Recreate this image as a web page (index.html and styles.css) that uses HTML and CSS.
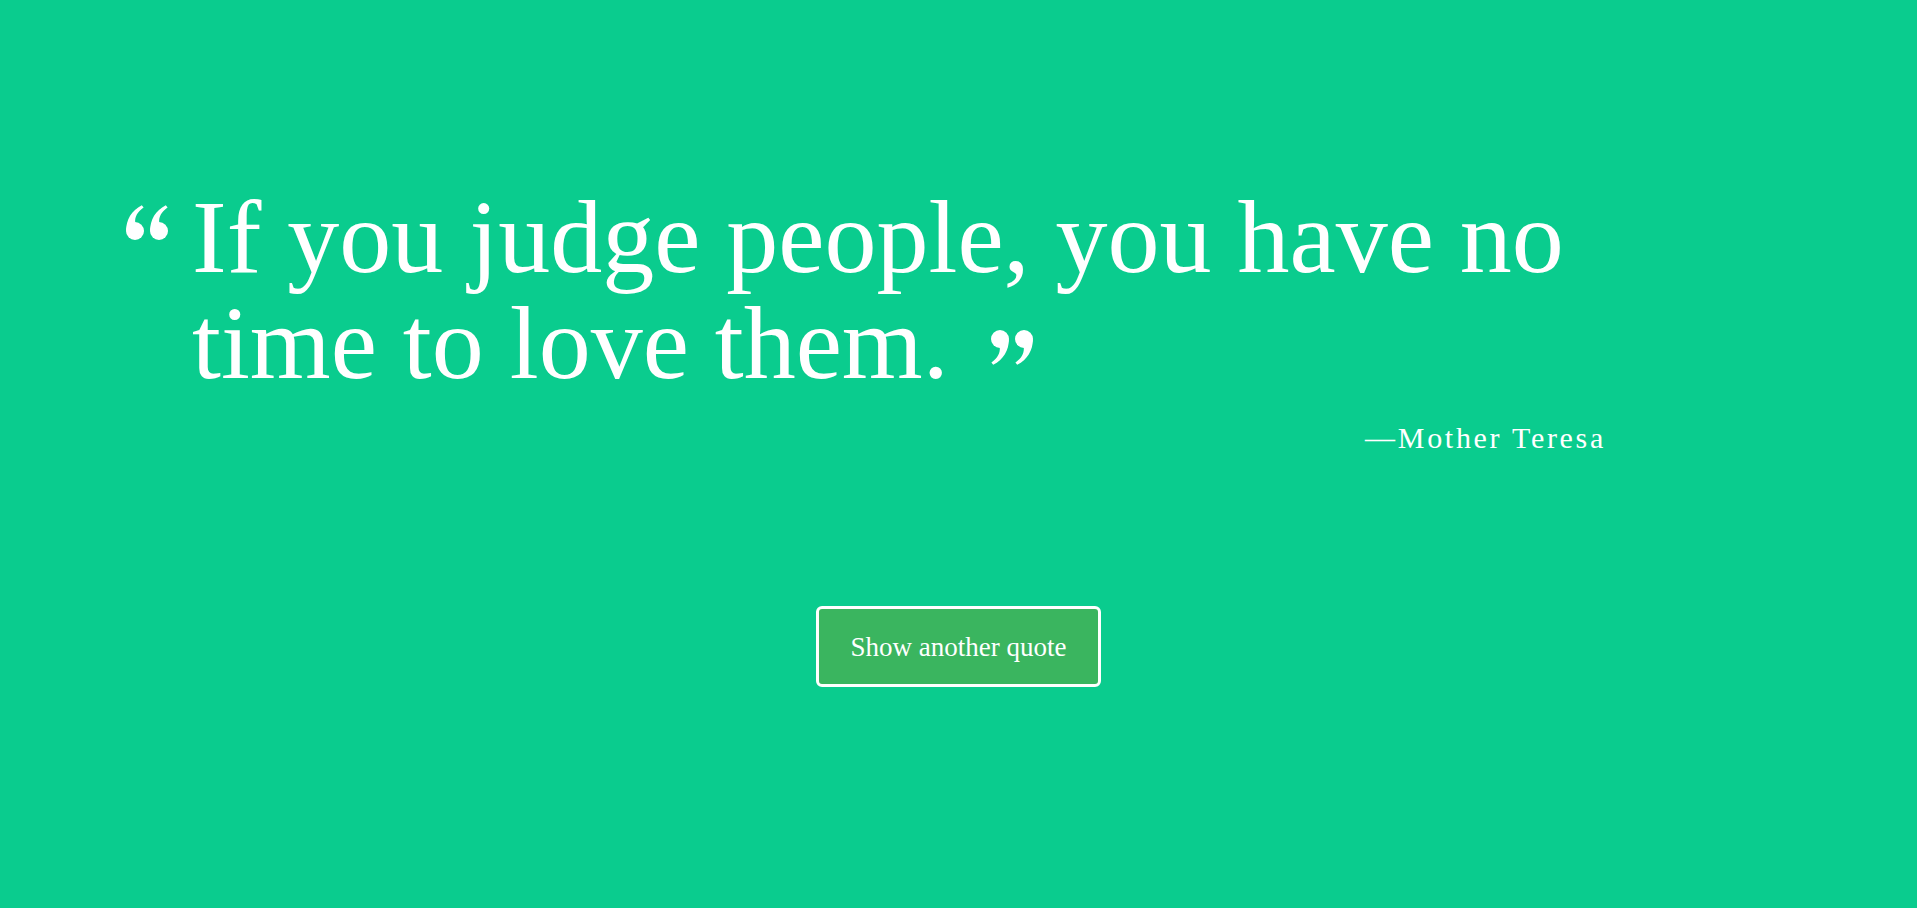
FILE: index.html
```html
<!DOCTYPE html>
<html lang="en">
<head>
<meta charset="utf-8">
<title>Random Quote</title>
<link rel="stylesheet" href="styles.css">
</head>
<body>
<main class="page">
  <section class="quote-box">
    <div class="quote-row">
      <svg class="quote-open" viewBox="0 0 46 35" aria-hidden="true">
        <g fill="#fff">
          <circle cx="9" cy="26" r="9"/>
          <path d="M0.1 26 C0.1 14.5 5.5 5.5 15.8 0.2 L17.6 2.6 C11.2 7 8.8 12 9.2 17.5 Z"/>
          <circle cx="33" cy="26" r="9"/>
          <path d="M24.1 26 C24.1 14.5 29.5 5.5 39.8 0.2 L41.6 2.6 C35.2 7 32.8 12 33.2 17.5 Z"/>
        </g>
      </svg>
      <p class="quote-text">If you judge people, you have no time to love them.<svg class="quote-close" viewBox="0 0 46 35" aria-hidden="true"><g fill="#fff" transform="rotate(180 23 17.5)"><circle cx="9" cy="26" r="9"/><path d="M0.1 26 C0.1 14.5 5.5 5.5 15.8 0.2 L17.6 2.6 C11.2 7 8.8 12 9.2 17.5 Z"/><circle cx="33" cy="26" r="9"/><path d="M24.1 26 C24.1 14.5 29.5 5.5 39.8 0.2 L41.6 2.6 C35.2 7 32.8 12 33.2 17.5 Z"/></g></svg></p>
    </div>
    <p class="author">—Mother Teresa</p>
  </section>
  <div class="actions">
    <button class="new-quote" type="button">Show another quote</button>
  </div>
</main>
</body>
</html>
```

FILE: styles.css
```css
html, body {
  margin: 0;
  height: 100%;
  background: #0acc8e;
}

body {
  font-family: "Liberation Serif", "Times New Roman", serif;
  color: #ffffff;
}

.page {
  padding-top: 184px;
}

.quote-box {
  margin-left: 126px;
  width: 1480px;
}

.quote-row {
  display: flex;
  align-items: flex-start;
  gap: 20px;
}

.quote-open {
  flex: none;
  width: 46px;
  height: 35px;
  margin-top: 21px;
}

.quote-text {
  flex: 1;
  margin: 0;
  font-size: 104px;
  line-height: 106px;
}

.quote-close {
  width: 46px;
  height: 35px;
  margin-left: 38px;
  vertical-align: 13px;
}

.author {
  margin: 24px 0 0;
  text-align: right;
  font-size: 30px;
  line-height: 36px;
  letter-spacing: 2.7px;
}

.actions {
  margin-top: 150px;
  text-align: center;
}

.new-quote {
  font-family: inherit;
  font-size: 27px;
  line-height: 35px;
  color: #ffffff;
  background: #3ab55f;
  border: 3px solid #ffffff;
  border-radius: 6px;
  padding: 21px 32px 19px;
  cursor: pointer;
}
```
